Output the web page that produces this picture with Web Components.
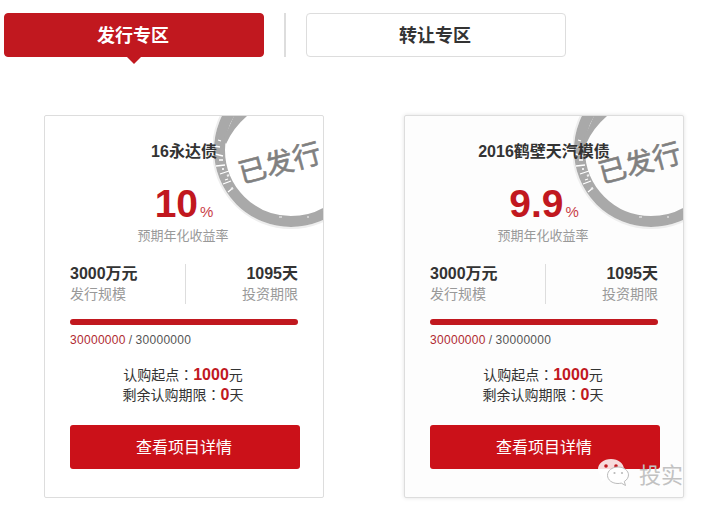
<!DOCTYPE html>
<html lang="zh-CN">
<head>
  <meta charset="UTF-8">
  <title>发行专区</title>
  <style>
    html, body { margin: 0; padding: 0; background: #fff; }
    body { font-family: "Liberation Sans", "Noto Sans CJK SC", sans-serif; width: 707px; height: 508px; overflow: hidden; position: relative; }
  </style>
</head>
<body>
  <tab-bar>
    <tab-item active>发行专区</tab-item>
    <tab-item>转让专区</tab-item>
  </tab-bar>
  <card-list>
    <bond-card title="16永达债" rate="10"></bond-card>
    <bond-card title="2016鹤壁天汽模债" rate="9.9" shadow></bond-card>
  </card-list>
  <wechat-mark>投实</wechat-mark>

  <template id="tabBarTpl">
    <style>
      :host { display: flex; padding: 13px 0 0 4px; height: 44px; }
      .line { width: 2px; height: 44px; background: #ddd; margin: 0 20px; }
    </style>
    <slot name="first"></slot>
    <div class="line"></div>
    <slot name="second"></slot>
  </template>

  <template id="tabItemTpl">
    <style>
      :host { display: block; position: relative; width: 260px; height: 44px; box-sizing: border-box; border: 1px solid #ddd; border-radius: 4px; background: #fff; color: #333; font: bold 18px/40px "Noto Sans CJK SC", sans-serif; text-align: center; padding-right: 2px; }
      :host([active]) { background: #c1181f; border-color: #c1181f; color: #fff; }
      :host([active])::after { content: ""; position: absolute; left: 122px; top: 43px; border: 7px solid transparent; border-bottom: 0; border-top-color: #c1181f; }
    </style>
    <slot></slot>
  </template>

  <template id="cardListTpl">
    <style>
      :host { display: flex; gap: 80px; padding: 58px 0 0 44px; }
    </style>
    <slot></slot>
  </template>

  <template id="bondCardTpl">
    <style>
      :host { display: block; position: relative; overflow: hidden; width: 280px; height: 383px; box-sizing: border-box; border: 1px solid #ddd; border-radius: 2px; background: #fff; font-family: "Liberation Sans", "Noto Sans CJK SC", sans-serif; color: #333; }
      :host([shadow]) { background: #fdfdfd; box-shadow: 0 0 4px rgba(0,0,0,.12); }
      .top { position: relative; z-index: 1; text-align: center; }
      h3 { margin: 0; padding-top: 25px; height: 22px; font-size: 16px; line-height: 22px; font-weight: bold; color: #333; }
      .rate { margin-top: 19px; height: 44px; line-height: 44px; color: #c1181f; font-size: 15px; }
      .rate b { font-size: 39px; }
      .rate span { opacity: .85; margin-left: 2px; }
      .sub { font: 13px/18px "Noto Sans CJK SC", sans-serif; color: #999; margin-top: 0; padding-right: 2px; }
      .stats { display: flex; margin: 20px 25px 0; width: 228px; height: 40px; position: relative; }
      .stats div { flex: 1; }
      .stats div:first-child { flex: none; width: 115px; }
      .stats div + div { text-align: right; border-left: 1px solid #ddd; }
      .stats b { display: block; font-size: 16px; line-height: 20px; color: #333; }
      .stats span { display: block; margin-top: -1px; font: 14px/20px "Noto Sans CJK SC", sans-serif; color: #999; }
      .bar { width: 228px; height: 6px; margin: 15px 25px 0; border-radius: 3px; background: #c1181f; }
      .nums { margin: 6px 25px 0; font-size: 12px; line-height: 18px; letter-spacing: .3px; word-spacing: -.6px; color: #555; }
      .nums i { font-style: normal; color: #b02a30; }
      .info { margin-top: 15px; padding-right: 2px; text-align: center; font: 14px/20px "Noto Sans CJK SC", sans-serif; color: #333; }
      .info div { height: 20px; }
      .info b { font: bold 16px/20px "Liberation Sans", sans-serif; color: #c1181f; }
      .info i { font: 14px/20px "Noto Sans CJK TC", sans-serif; }
      button { display: block; width: 230px; height: 44px; margin: 21px 25px 0; padding: 0 2px 2px 0; border: 0; border-radius: 3px; background: #cb1119; color: #fff; font: 16px "Noto Sans CJK SC", sans-serif; }
    </style>
    <sold-stamp>已发行</sold-stamp>
    <div class="top">
      <h3 id="name"></h3>
      <div class="rate"><b id="rate"></b><span>%</span></div>
      <div class="sub">预期年化收益率</div>
    </div>
    <div class="stats">
      <div><b>3000万元</b><span>发行规模</span></div>
      <div><b>1095天</b><span>投资期限</span></div>
    </div>
    <div class="bar"></div>
    <div class="nums"><i>30000000</i> / 30000000</div>
    <div class="info">
      <div>认购起点<i lang="zh-TW">：</i><b>1000</b>元</div>
      <div>剩余认购期限<i lang="zh-TW">：</i><b>0</b>天</div>
    </div>
    <button>查看项目详情</button>
  </template>

  <template id="stampTpl">
    <style>
      :host { display: block; position: absolute; left: 168px; top: -46px; width: 160px; height: 160px; }
      svg { position: absolute; inset: 0; }
      .t { position: absolute; left: 24px; top: 77px; width: 84px; text-align: center; font: 28px/28px "Noto Sans CJK SC", sans-serif; color: #808080; -webkit-text-stroke: .6px #808080; transform: rotate(-15deg); white-space: nowrap; }
    </style>
    <svg width="160" height="160" viewBox="0 0 160 160">
      <circle cx="78" cy="80" r="78" fill="none" stroke="#eee" stroke-width="2"/>
      <circle cx="78" cy="80" r="71.500" fill="none" stroke="#a9a9a9" stroke-width="11"/>
      <path d="M21 46L34 46Q20 58 13 74L10 70Z" fill="#a9a9a9"/>
      <path d="M2 84l8 2M6 90l4 0M3 96l9-1M7 104l9-3M12 110l3-1M10 114l8-3M15 122l5-4M1 76l6 1M5 70l3 1" stroke="#fff" stroke-width="1.300" fill="none"/>
      <path d="M9 99h2M14 106l2-1M18 119l2-1" stroke="#eee" stroke-width="2" fill="none"/>
      <path d="M124 131l8-6M66 147h3M94 147h2M110 141l3-1" stroke="#ddd" stroke-width="1.400" fill="none"/>
    </svg>
    <div class="t"><slot></slot></div>
  </template>

  <template id="markTpl">
    <style>
      :host { position: absolute; left: 597px; top: 458px; display: flex; align-items: center; gap: 8px; height: 30px; font: 22px "Noto Sans CJK SC", sans-serif; color: #c2c2c2; }
    </style>
    <svg width="34" height="30" viewBox="0 0 34 30">
      <path d="M14 1C6.800 1 1 5.600 1 11.200c0 3.200 1.900 6 4.800 7.900L4 24l5.600-3c1.400 .3 2.900 .5 4.400 .5 7.200 0 13-4.600 13-10.300C27 5.600 21.200 1 14 1z" fill="#fff" fill-opacity=".85"/>
      <circle cx="9" cy="8" r="1.800" fill="#c1181f"/>
      <circle cx="19" cy="8" r="1.800" fill="#c1181f"/>
      <path d="M21 9c-6 0-10.500 3.700-10.500 8.300S15 25.500 21 25.500c1.200 0 2.300-.2 3.300-.4l4.200 2.400-1.200-4c2.500-1.500 4.200-3.900 4.200-6.600C31.500 12.700 27 9 21 9z" fill="#fff" stroke="#bbb"/>
      <circle cx="17.500" cy="15" r="1.100" fill="#bbb"/>
      <circle cx="25" cy="15" r="1.100" fill="#bbb"/>
    </svg>
    <slot></slot>
  </template>

  <script>
    class BaseEl extends HTMLElement {
      constructor(tplId) {
        super()
        let shadow = this.attachShadow({mode: 'open'})
        shadow.appendChild(document.getElementById(tplId).content.cloneNode(true))
      }
    }

    class TabItem extends BaseEl {
      constructor() { super('tabItemTpl') }
    }

    class TabBar extends BaseEl {
      constructor() { super('tabBarTpl') }
      connectedCallback() {
        let items = this.querySelectorAll('tab-item')
        if (items[0]) items[0].slot = 'first'
        if (items[1]) items[1].slot = 'second'
      }
    }

    class CardList extends BaseEl {
      constructor() { super('cardListTpl') }
    }

    class SoldStamp extends BaseEl {
      constructor() { super('stampTpl') }
    }

    class WechatMark extends BaseEl {
      constructor() { super('markTpl') }
    }

    class BondCard extends BaseEl {
      constructor() { super('bondCardTpl') }
      connectedCallback() {
        this.shadowRoot.getElementById('name').textContent = this.getAttribute('title')
        this.shadowRoot.getElementById('rate').textContent = this.getAttribute('rate')
      }
    }

    customElements.define('tab-item', TabItem)
    customElements.define('tab-bar', TabBar)
    customElements.define('card-list', CardList)
    customElements.define('sold-stamp', SoldStamp)
    customElements.define('wechat-mark', WechatMark)
    customElements.define('bond-card', BondCard)
  </script>
</body>
</html>
